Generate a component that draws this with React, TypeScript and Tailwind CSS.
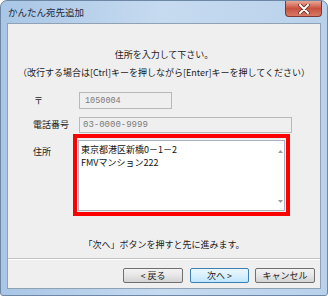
export default function App() {
  return (
    <div className="w-[328px] h-[296px] bg-white font-['Noto_Sans_CJK_JP',sans-serif] text-[#1b1b1b]">
      <div className="relative h-full flex flex-col rounded-t-[7px] rounded-b-[3px] border border-[#6d87a5] bg-gradient-to-r from-[#a9c6e6] via-[#c6dbf0] to-[#b9d1eb] px-[6px] pb-[6px]">
        {/* title bar */}
        <div className="h-[22px] flex items-center pl-[1px]">
          <span className="text-[9.5px] leading-[12px] text-[#1e2a38]">かんたん宛先追加</span>
        </div>
        <div className="absolute top-0 right-[5px] w-[37px] h-[16px] rounded-b-[4px] border border-t-0 border-[#7a3a33] bg-gradient-to-b from-[#e8a797] via-[#c8513e] to-[#d57a66] flex items-center justify-center">
          <svg width="12" height="10" viewBox="0 0 12 10">
            <path d="M2 1 L10 9 M10 1 L2 9" stroke="#6b2a22" strokeWidth="3.6" strokeLinecap="round" />
            <path d="M2 1 L10 9 M10 1 L2 9" stroke="#ffffff" strokeWidth="2" strokeLinecap="round" />
          </svg>
        </div>

        {/* client area */}
        <div className="flex-1 flex flex-col border border-[#8fa1b5] bg-[#efefef] text-[9px] leading-[12px]">
          <div className="mt-[25px] h-[12px] text-center">住所を入力して下さい。</div>
          <div className="mt-[6px] h-[12px] text-center">（改行する場合は[Ctrl]キーを押しながら[Enter]キーを押してください）</div>

          {/* postal */}
          <div className="mt-[13px] flex pl-[26px]">
            <div className="w-[45px] h-[17px] flex items-center">〒</div>
            <div className="w-[93px] h-[17px] border border-[#b9b9b9] bg-[#efefef] flex items-center pl-[5px] font-['Liberation_Mono',monospace] text-[8.5px] text-[#7a7a7a]">1050004</div>
          </div>

          {/* phone */}
          <div className="mt-[8px] flex pl-[25px]">
            <div className="w-[46px] h-[16px] flex items-center">電話番号</div>
            <div className="w-[213px] h-[16px] border border-[#b9b9b9] bg-[#efefef] flex items-center pl-[3px] font-['Liberation_Mono',monospace] text-[9px] text-[#7a7a7a]">03-0000-9999</div>
          </div>

          {/* address */}
          <div className="mt-[1px] flex pl-[25px]">
            <div className="w-[46px] pt-[12px]">住所</div>
            <div className="-ml-[6px] w-[217px] h-[82px] border-[4px] border-[#ff0000] pt-[2px] pl-[1px] pr-[1px] pb-[1px]">
              <div className="h-full flex border border-[#a9b4c2] bg-white">
                <div className="flex-1 pl-[2px] pt-[2px] text-[9px] leading-[13px] text-[#111]">
                  <div>東京都港区新橋0－1－2</div>
                  <div>FMVマンション222</div>
                </div>
                <div className="w-[8px] flex flex-col items-center justify-between pt-[9px] pb-[7px]">
                  <svg width="5" height="3" viewBox="0 0 5 3"><path d="M0 3 L2.5 0 L5 3 Z" fill="#9a9a9a" /></svg>
                  <svg width="5" height="3" viewBox="0 0 5 3"><path d="M0 0 L2.5 3 L5 0 Z" fill="#9a9a9a" /></svg>
                </div>
              </div>
            </div>
          </div>

          <div className="mt-[23px] h-[12px] text-center">「次へ」ボタンを押すと先に進みます。</div>

          <div className="mt-[7px] h-[2px] border-t border-[#c2c2c2] bg-white"></div>

          <div className="mt-[8px] flex justify-end gap-[7px] pr-[5px]">
            <div className="w-[60px] h-[15px] rounded-[2px] border border-[#707070] bg-gradient-to-b from-[#f3f3f3] via-[#e6e6e6] to-[#d3d3d3] flex items-center justify-center text-[9px]">&lt; 戻る</div>
            <div className="w-[59px] h-[15px] rounded-[2px] border border-[#3c7fb1] bg-gradient-to-b from-[#eaf6fd] via-[#d9f0fc] to-[#bee6fd] flex items-center justify-center text-[9px] -mr-[1px]">次へ &gt;</div>
            <div className="w-[60px] h-[15px] rounded-[2px] border border-[#707070] bg-gradient-to-b from-[#f3f3f3] via-[#e6e6e6] to-[#d3d3d3] flex items-center justify-center text-[9px]">キャンセル</div>
          </div>
        </div>
      </div>
    </div>
  );
}
